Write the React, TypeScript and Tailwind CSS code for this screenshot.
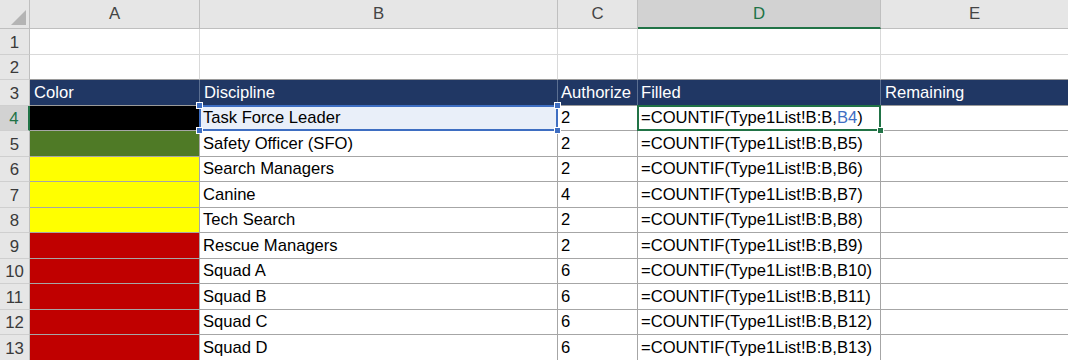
import React from "react";

const font = { fontFamily: '"Liberation Sans", Arial, sans-serif' };

type DataRow = { n: number; color: string; disc: string; auth: string };

const data: DataRow[] = [
  { n: 4, color: "bg-[#000000]", disc: "Task Force Leader", auth: "2" },
  { n: 5, color: "bg-[#4f7a26]", disc: "Safety Officer (SFO)", auth: "2" },
  { n: 6, color: "bg-[#ffff00]", disc: "Search Managers", auth: "2" },
  { n: 7, color: "bg-[#ffff00]", disc: "Canine", auth: "4" },
  { n: 8, color: "bg-[#ffff00]", disc: "Tech Search", auth: "2" },
  { n: 9, color: "bg-[#c00000]", disc: "Rescue Managers", auth: "2" },
  { n: 10, color: "bg-[#c00000]", disc: "Squad A", auth: "6" },
  { n: 11, color: "bg-[#c00000]", disc: "Squad B", auth: "6" },
  { n: 12, color: "bg-[#c00000]", disc: "Squad C", auth: "6" },
  { n: 13, color: "bg-[#c00000]", disc: "Squad D", auth: "6" },
];

function RowNum({ n, active }: { n: number; active?: boolean }) {
  return (
    <div
      className={
        "w-[30px] shrink-0 flex items-end justify-center pb-[1px] text-[16.8px] border-b border-b-[#cfcfcf] " +
        (active
          ? "bg-[#d2d2d2] text-[#217346] border-r-2 border-r-[#217346]"
          : "bg-[#e6e6e6] text-[#3a3a3a] border-r border-r-[#bfbfbf]")
      }
    >
      {n}
    </div>
  );
}

export default function App() {
  return (
    <div
      className="w-[1068px] h-[360px] overflow-hidden bg-white text-[16.6px] leading-[20px] text-black"
      style={font}
    >
      {/* column header */}
      <div className="flex h-[29px] text-[16.8px]">
        <div className="w-[30px] shrink-0 bg-[#e6e6e6] border-r border-b border-[#bfbfbf] relative">
          <svg className="absolute right-[3px] bottom-[3px]" width="15" height="15" viewBox="0 0 15 15">
            <polygon points="15,0 15,15 0,15" fill="#b4b4b4" />
          </svg>
        </div>
        <div className="w-[170px] shrink-0 bg-[#e6e6e6] border-r border-b border-[#bfbfbf] flex items-center justify-center text-[#444]">A</div>
        <div className="w-[358px] shrink-0 bg-[#e6e6e6] border-r border-b border-[#bfbfbf] flex items-center justify-center text-[#444]">B</div>
        <div className="w-[80px] shrink-0 bg-[#e6e6e6] border-r border-b border-[#bfbfbf] flex items-center justify-center text-[#444]">C</div>
        <div className="w-[243px] shrink-0 bg-[#d2d2d2] border-r border-r-[#bfbfbf] border-b-2 border-b-[#217346] flex items-center justify-center text-[#217346]">D</div>
        <div className="w-[187px] shrink-0 bg-[#e6e6e6] border-b border-[#bfbfbf] flex items-center justify-center text-[#444]">E</div>
      </div>

      {/* rows 1, 2 */}
      {[1, 2].map((n) => (
        <div key={n} className={"flex " + (n === 1 ? "h-[26px]" : "h-[25px]")}>
          <RowNum n={n} />
          <div className={"w-[170px] shrink-0 border-r border-r-[#d9d9d9] border-b " + (n === 2 ? "border-b-[#9a9a9a]" : "border-b-[#d9d9d9]")} />
          <div className={"w-[358px] shrink-0 border-r border-r-[#d9d9d9] border-b " + (n === 2 ? "border-b-[#9a9a9a]" : "border-b-[#d9d9d9]")} />
          <div className={"w-[80px] shrink-0 border-r border-r-[#d9d9d9] border-b " + (n === 2 ? "border-b-[#9a9a9a]" : "border-b-[#d9d9d9]")} />
          <div className={"w-[243px] shrink-0 border-r border-r-[#d9d9d9] border-b " + (n === 2 ? "border-b-[#9a9a9a]" : "border-b-[#d9d9d9]")} />
          <div className={"w-[187px] shrink-0 border-b " + (n === 2 ? "border-b-[#9a9a9a]" : "border-b-[#d9d9d9]")} />
        </div>
      ))}

      {/* row 3 header */}
      <div className="flex h-[26px]">
        <RowNum n={3} />
        <div className="w-[170px] shrink-0 bg-[#203764] text-white border-r border-r-[#5b6f91] border-b border-b-[#9a9a9a] flex items-end px-[4px] pb-[2px]">Color</div>
        <div className="w-[358px] shrink-0 bg-[#203764] text-white border-r border-r-[#5b6f91] border-b border-b-[#9a9a9a] flex items-end px-[4px] pb-[2px]">Discipline</div>
        <div className="w-[80px] shrink-0 bg-[#203764] text-white border-r border-r-[#5b6f91] border-b border-b-[#9a9a9a] flex items-end px-[3px] pb-[2px] overflow-hidden whitespace-nowrap">Authorize</div>
        <div className="w-[243px] shrink-0 bg-[#203764] text-white border-r border-r-[#5b6f91] border-b border-b-[#9a9a9a] flex items-end px-[3px] pb-[2px]">Filled</div>
        <div className="w-[187px] shrink-0 bg-[#203764] text-white border-b border-b-[#9a9a9a] flex items-end px-[4px] pb-[2px]">Remaining</div>
      </div>

      {/* data rows */}
      {data.map((r, i) => {
        const active = r.n === 4;
        const h = i % 2 === 0 ? "h-[25px]" : "h-[26px]";
        return (
          <div key={r.n} className={"flex " + h}>
            <RowNum n={r.n} active={active} />
            <div className={"w-[170px] shrink-0 border-r border-b border-[#a6a6a6] " + r.color} />
            <div
              className={
                "w-[358px] shrink-0 border-r border-b border-[#a6a6a6] flex items-end px-[3px] pb-[2px] relative " +
                (active ? "bg-[#e9eff9]" : "")
              }
            >
              {r.disc}
              {active && (
                <>
                  <div className="absolute -left-[1px] -top-[1px] -right-[1px] -bottom-[1px] border-2 border-[#3e6ec2] z-10" />
                  <div className="absolute -left-[4px] -top-[4px] w-[7px] h-[7px] bg-[#3e6ec2] border border-white z-20" />
                  <div className="absolute -right-[4px] -top-[4px] w-[7px] h-[7px] bg-[#3e6ec2] border border-white z-20" />
                  <div className="absolute -left-[4px] -bottom-[4px] w-[7px] h-[7px] bg-[#3e6ec2] border border-white z-20" />
                  <div className="absolute -right-[4px] -bottom-[4px] w-[7px] h-[7px] bg-[#3e6ec2] border border-white z-20" />
                </>
              )}
            </div>
            <div className="w-[80px] shrink-0 border-r border-b border-[#a6a6a6] flex items-end px-[3px] pb-[2px]">{r.auth}</div>
            <div className="w-[243px] shrink-0 border-r border-b border-[#a6a6a6] flex items-end px-[3px] pb-[2px] relative whitespace-nowrap">
              =COUNTIF(Type1List!B:B,
              {active ? <span className="text-[#3e6ec2]">B4</span> : "B" + r.n})
              {active && (
                <>
                  <div className="absolute -left-[1px] -top-[1px] -right-[1px] -bottom-[1px] border-2 border-[#217346] z-10" />
                  <div className="absolute -right-[4px] -bottom-[4px] w-[7px] h-[7px] bg-[#217346] border border-white z-20" />
                </>
              )}
            </div>
            <div className="w-[187px] shrink-0 border-b border-[#a6a6a6]" />
          </div>
        );
      })}
    </div>
  );
}
